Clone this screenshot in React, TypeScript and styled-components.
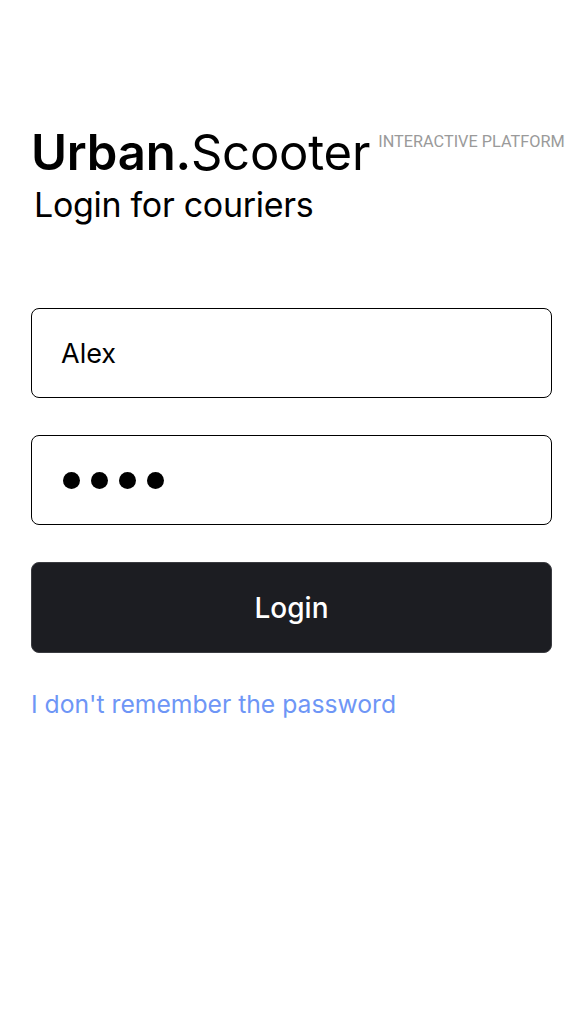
import React from 'react'
import styled, { createGlobalStyle } from 'styled-components'

const GlobalStyle = createGlobalStyle`
  html, body {
    margin: 0;
    padding: 0;
    background: #fff;
  }
  body {
    font-family: Inter, 'Noto Sans', sans-serif;
    color: #000;
  }
`

const Page = styled.div`
  width: 584px;
  min-height: 1034px;
  box-sizing: border-box;
  padding: 124px 32px 0 31px;
  display: flex;
  flex-direction: column;
`

const Header = styled.header`
  display: flex;
  flex-direction: column;
`

const LogoRow = styled.div`
  display: flex;
  align-items: flex-start;
  gap: 8px;
`

const Logo = styled.h1`
  margin: 0;
  font-family: Inter, sans-serif;
  font-size: 49px;
  line-height: 58px;
  font-weight: 400;
  letter-spacing: -0.2px;

  b {
    font-weight: 600;
  }
`

const Tagline = styled.span`
  margin-top: 9px;
  font-family: Roboto, sans-serif;
  font-size: 16.3px;
  line-height: 18px;
  color: #9a9a9a;
  white-space: nowrap;
`

const Subtitle = styled.h2`
  margin: 2px 0 0 3px;
  font-size: 34px;
  line-height: 42px;
  font-weight: 400;
  letter-spacing: -0.3px;
`

const Form = styled.form`
  margin-top: 82px;
  display: flex;
  flex-direction: column;
  gap: 37px;
`

const Field = styled.div`
  height: 90px;
  box-sizing: border-box;
  border: 1.5px solid #000;
  border-radius: 8px;
  display: flex;
  align-items: center;
  padding: 0 29px;
  font-size: 27px;
`

const Dots = styled.div`
  display: flex;
  gap: 11px;
  margin-left: 2px;
`

const Dot = styled.span`
  width: 17px;
  height: 17px;
  border-radius: 50%;
  background: #000;
`

const Button = styled.button`
  height: 91px;
  border: 1px solid #3a3b40;
  border-radius: 8px;
  background: #1c1d22;
  color: #fff;
  font-family: Inter, 'Noto Sans', sans-serif;
  font-size: 28px;
  font-weight: 500;
  cursor: pointer;
`

const ForgotLink = styled.a`
  margin-top: 36px;
  font-size: 24.7px;
  color: #6e96f6;
  text-decoration: none;
`

export default function App() {
  return (
    <>
      <GlobalStyle />
      <Page>
        <Header>
          <LogoRow>
            <Logo>
              <b>Urban.</b>Scooter
            </Logo>
            <Tagline>INTERACTIVE PLATFORM</Tagline>
          </LogoRow>
          <Subtitle>Login for couriers</Subtitle>
        </Header>
        <Form onSubmit={(e) => e.preventDefault()}>
          <Field>Alex</Field>
          <Field>
            <Dots>
              {[0, 1, 2, 3].map((i) => (
                <Dot key={i} />
              ))}
            </Dots>
          </Field>
          <Button type="submit">Login</Button>
        </Form>
        <ForgotLink href="#">I don't remember the password</ForgotLink>
      </Page>
    </>
  )
}
